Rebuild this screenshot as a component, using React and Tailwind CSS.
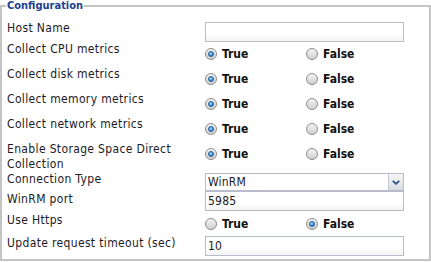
import React from "react";

const FONT = { fontFamily: '"DejaVu Sans Condensed", "DejaVu Sans", sans-serif' };

function Radio({ checked }) {
  return (
    <span className="flex h-[12px] w-[12px] shrink-0 items-center justify-center rounded-full border border-[#8c8c8c] bg-[linear-gradient(180deg,#f4f4f4,#cfcfcf)]">
      {checked && (
        <span className="h-[6px] w-[6px] rounded-full border border-[#1d5a9c] bg-[radial-gradient(circle_at_40%_35%,#a8dcff,#2a7cc8_75%)]" />
      )}
    </span>
  );
}

function RadioPair({ value, mt }) {
  return (
    <div className={`flex h-[16px] items-center ${mt}`}>
      <div className="flex w-[101px] items-center gap-[5px]">
        <Radio checked={value} />
        <span className="text-[12px] font-bold text-[#111]">True</span>
      </div>
      <div className="flex items-center gap-[5px]">
        <Radio checked={!value} />
        <span className="text-[12px] font-bold text-[#111]">False</span>
      </div>
    </div>
  );
}

function Row({ h, label, lmt = "", children }) {
  return (
    <div className={`flex ${h}`}>
      <div className={`w-[203px] shrink-0 pl-[5px] text-[12px] leading-[15px] tracking-[0.35px] text-[#1c1a26] ${lmt}`}>{label}</div>
      <div className="w-[199px]">{children}</div>
    </div>
  );
}

function TextBox({ value }) {
  return (
    <div className="flex h-[20px] w-[199px] items-center border border-[#b7bbcc] bg-[linear-gradient(180deg,#ffffff_60%,#f1f5f2)] px-[2px] text-[12px] tracking-[0.2px] text-[#1a1a1a]">
      {value}
    </div>
  );
}

export default function App() {
  return (
    <div className="h-[262px] w-[431px] bg-white" style={FONT}>
      <fieldset className="h-[261px] w-[431px] border-2 border-[#c4c4c4]">
        <legend className="ml-[4px] px-[1px] text-[11px] font-bold leading-[11px] text-[#213f8f]">Configuration</legend>
        <div className="flex flex-col pt-[10px]">
          <Row h="h-[21px]" label="Host Name">
            <div className="mt-[1px]">
              <TextBox value="" />
            </div>
          </Row>
          <Row h="h-[25px]" label="Collect CPU metrics">
            <RadioPair value={true} mt="mt-[4px]" />
          </Row>
          <Row h="h-[25px]" label="Collect disk metrics">
            <RadioPair value={true} mt="mt-[4px]" />
          </Row>
          <Row h="h-[25px]" label="Collect memory metrics">
            <RadioPair value={true} mt="mt-[4px]" />
          </Row>
          <Row h="h-[25px]" label="Collect network metrics">
            <RadioPair value={true} mt="mt-[4px]" />
          </Row>
          <Row h="h-[30px]" label={<>Enable Storage Space Direct<br />Collection</>}>
            <RadioPair value={true} mt="mt-[4px]" />
          </Row>
          <Row h="h-[19px]" label="Connection Type">
            <div className="mt-[1px] flex h-[18px] w-[199px] border border-[#b7bbcc] bg-white">
              <div className="flex flex-1 items-center px-[2px] text-[12px] tracking-[0.2px] text-[#1a1a1a]">WinRM</div>
              <div className="flex w-[15px] items-center justify-center border-l border-[#c8cad6] bg-[linear-gradient(180deg,#f6f6f6,#d9dbe0)]">
                <svg width="8" height="5" viewBox="0 0 8 5">
                  <path d="M0.8 0.8 L4 3.8 L7.2 0.8" fill="none" stroke="#2e4f8e" strokeWidth="1.8" />
                </svg>
              </div>
            </div>
          </Row>
          <Row h="h-[20px]" label="WinRM port" lmt="mt-[1px]">
            <TextBox value="5985" />
          </Row>
          <Row h="h-[25px]" label="Use Https" lmt="mt-[2px]">
            <RadioPair value={false} mt="mt-[5px]" />
          </Row>
          <Row h="h-[20px]" label="Update request timeout (sec)">
            <TextBox value="10" />
          </Row>
        </div>
      </fieldset>
    </div>
  );
}
